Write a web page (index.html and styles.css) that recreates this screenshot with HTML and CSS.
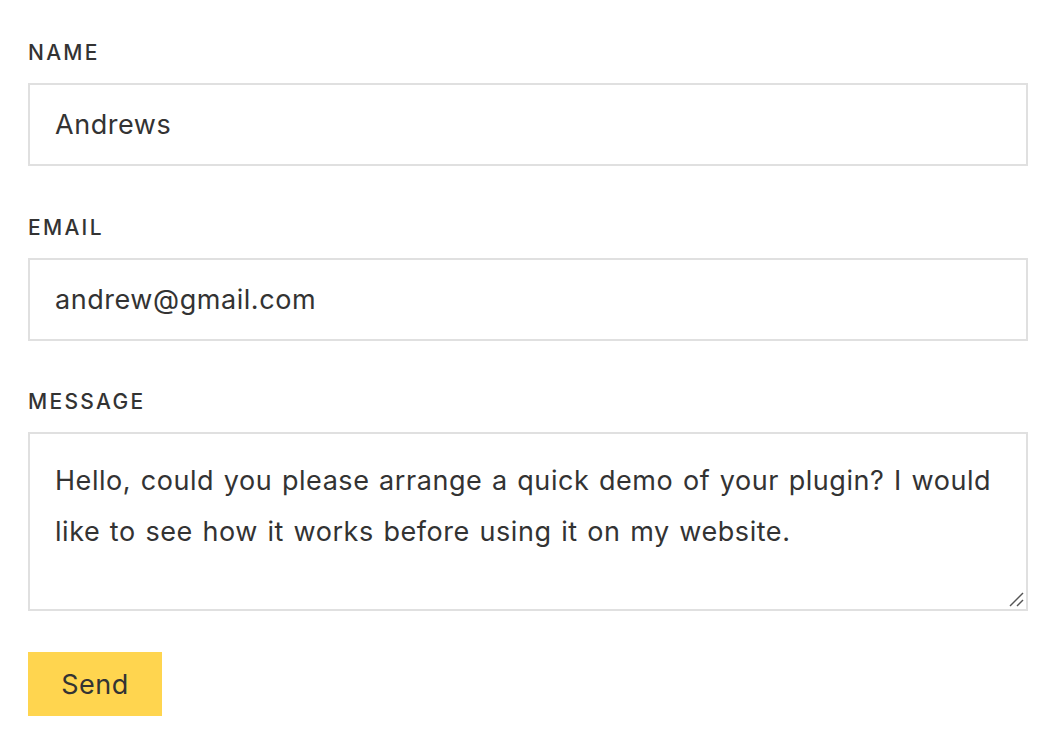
FILE: index.html
```html
<!DOCTYPE html>
<html>
<head>
<meta charset="utf-8">
<link rel="stylesheet" href="styles.css">
</head>
<body>
<form class="form">
  <div class="field">
    <label class="label" for="name">NAME</label>
    <input class="input" id="name" type="text" value="Andrews">
  </div>
  <div class="field">
    <label class="label" for="email">EMAIL</label>
    <input class="input" id="email" type="text" value="andrew@gmail.com">
  </div>
  <div class="field field-last">
    <label class="label" for="msg">MESSAGE</label>
    <div class="area-wrap">
      <textarea class="input textarea" id="msg">Hello, could you please arrange a quick demo of your plugin? I would like to see how it works before using it on my website.</textarea>
      <svg class="grip" width="16" height="16" viewBox="0 0 16 16">
        <line x1="2" y1="15" x2="15" y2="2" stroke="#555" stroke-width="1.4"/>
        <line x1="9" y1="15" x2="15" y2="9" stroke="#555" stroke-width="1.4"/>
      </svg>
    </div>
  </div>
  <button class="send" type="button">Send</button>
</form>
</body>
</html>
```

FILE: styles.css
```css
html, body {
  margin: 0;
  padding: 0;
  background: #fff;
}
body {
  font-family: Inter, "Noto Sans", sans-serif;
  color: #333;
}
.form {
  display: flex;
  flex-direction: column;
  align-items: flex-start;
  padding: 38px 32px 0 28px;
  width: 1000px;
}
.field {
  display: flex;
  flex-direction: column;
  width: 100%;
  margin-bottom: 47px;
}
.field-last {
  margin-top: -1px;
  margin-bottom: 41px;
}
.label {
  font-size: 21px;
  font-weight: 500;
  letter-spacing: 2.3px;
  line-height: 30px;
  color: #333;
  margin-bottom: 15px;
}
.input {
  box-sizing: border-box;
  width: 1000px;
  height: 83px;
  border: 2px solid #e0e0e0;
  border-radius: 0;
  padding: 0 25px;
  font-family: Inter, "Noto Sans", sans-serif;
  font-size: 27px;
  letter-spacing: 0.55px;
  word-spacing: 1.5px;
  color: #333;
  background: #fff;
  outline: none;
  margin: 0;
}
.area-wrap {
  position: relative;
  width: 1000px;
}
.textarea {
  height: 179px;
  padding: 21px 25px;
  line-height: 51px;
  resize: none;
  display: block;
}
.grip {
  position: absolute;
  right: 4px;
  bottom: 4px;
}
.send {
  background: #ffd54f;
  border: none;
  border-radius: 0;
  width: 134px;
  height: 64px;
  font-family: Inter, "Noto Sans", sans-serif;
  font-size: 27px;
  letter-spacing: 0.55px;
  color: #333;
  padding: 0;
}
```
